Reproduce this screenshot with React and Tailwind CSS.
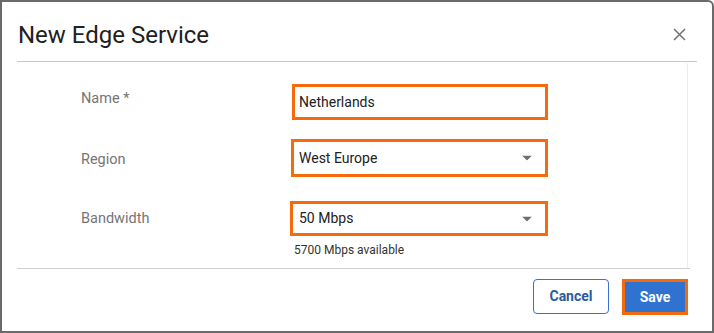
import React from "react";

const Caret = () => (
  <svg width="10" height="5" viewBox="0 0 10 5" className="absolute right-[13px] top-1/2 -translate-y-1/2">
    <path d="M0 0h10L5 5z" fill="#6e6e6e" />
  </svg>
);

const FieldRow = ({ label, labelClass = "", children, className = "" }) => (
  <div className={`flex items-start ${className}`}>
    <div className={`w-[275px] pl-[64px] text-[14.5px] text-[#757575] leading-[20px] ${labelClass}`}>{label}</div>
    <div className="flex flex-col">{children}</div>
  </div>
);

const App = () => {
  return (
    <div
      className="w-[714px] h-[333px] bg-white border-2 border-[#6a6a6a] rounded-tr-[6px] flex flex-col overflow-hidden"
      style={{ fontFamily: "Roboto, 'Liberation Sans', sans-serif" }}
    >
      {/* header */}
      <div className="h-[59px] flex items-center justify-between pl-[16px] pr-[26px] pt-[6px]">
        <h1 className="text-[24px] text-[#212121] font-normal">New Edge Service</h1>
        <button className="text-[#757575]">
          <svg width="13" height="13" viewBox="0 0 13 13">
            <path d="M1 1l11 11M12 1L1 12" stroke="#767676" strokeWidth="1.6" />
          </svg>
        </button>
      </div>
      <div className="mx-[15px] h-px bg-[#c8c8c8]" />

      {/* body */}
      <div className="ml-[15px] mr-[24px] h-[206px] border-r border-[#ececec] rounded-tr-[4px] pt-[22px]">
        <FieldRow label="Name *" labelClass="mt-[5px]">
          <div className="w-[256px] h-[36px] border-[3px] border-[#f56a0a] flex items-center pl-[4px] text-[14px] text-[#212121]">
            Netherlands
          </div>
        </FieldRow>
        <FieldRow label="Region" labelClass="mt-[11px]" className="mt-[19px]">
          <div className="relative w-[257px] h-[38px] border-[3px] border-[#f56a0a] flex items-center pl-[5px] text-[14px] text-[#212121] -ml-px">
            West Europe
            <Caret />
          </div>
        </FieldRow>
        <FieldRow label="Bandwidth" labelClass="mt-[8px]" className="mt-[24px]">
          <div className="relative w-[258px] h-[35px] border-[3px] border-[#f56a0a] flex items-center pl-[6px] text-[14px] text-[#212121] -ml-[2px]">
            50 Mbps
            <Caret />
          </div>
          <div className="mt-[5px] ml-[2px] text-[12px] text-[#333]">5700 Mbps available</div>
        </FieldRow>
      </div>
      <div className="ml-[15px] mr-[22px] h-px bg-[#cfcfcf]" />

      {/* footer */}
      <div className="flex justify-end items-start gap-[13px] pr-[24px] pt-[10px]">
        <button className="w-[76px] h-[35px] rounded-[4px] border border-[#3a72c9] text-[#2b5b9a] text-[14px] font-bold bg-white">
          Cancel
        </button>
        <button className="w-[66px] h-[36px] border-[3px] border-[#f56a0a] bg-[#2f72d0] text-white text-[14px] font-bold">
          Save
        </button>
      </div>
    </div>
  );
};

export default App;
